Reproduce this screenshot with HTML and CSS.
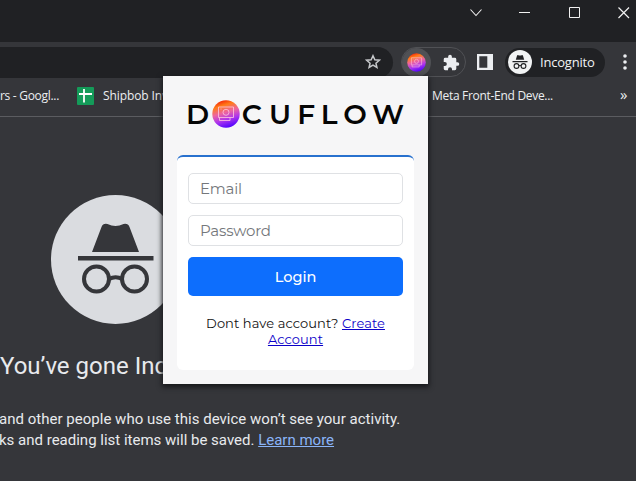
FILE: index.html
```html
<!DOCTYPE html>
<html lang="en">
<head>
<meta charset="utf-8">
<title>Docuflow</title>
<link rel="stylesheet" href="styles.css">
</head>
<body>
<div class="browser">
  <header class="titlebar">
    <svg class="window-controls" width="176" height="26" viewBox="0 0 176 26" fill="none" stroke="#f1f1f1">
      <path d="M10.500 9.500l5.500 6 5.500-6" stroke-width="1.100"/>
      <path d="M59 12.500h11"/>
      <path d="M109.500 7.500h10v10h-10z"/>
      <path d="M158.500 7.500l10.500 10.500M169 7.500l-10.500 10.500" stroke-width="1.200"/>
    </svg>
  </header>
  <div class="toolbar">
    <div class="omnibox">
      <svg width="16" height="16" viewBox="0 0 16 16" fill="none" stroke="#c6c8cb" stroke-width="1.500"><path d="M8 1.700l1.850 4.050 4.450.45-3.350 2.950.98 4.350L8 11.200l-3.930 2.300.98-4.350L1.700 6.200l4.450-.45z"/></svg>
    </div>
    <div class="extensions">
      <span class="extension-active">
        <svg width="19" height="19" viewBox="0 0 28 28"><use href="#brand"/></svg>
      </span>
      <svg class="puzzle" width="17" height="17" viewBox="1 0 23 23" fill="#eceef1"><path d="M20.500 11H19V7a2 2 0 0 0-2-2h-4V3.500a2.500 2.500 0 0 0-5 0V5H4a2 2 0 0 0-2 2v3.800h1.500a2.700 2.700 0 0 1 0 5.400H2V20a2 2 0 0 0 2 2h3.800v-1.500a2.700 2.700 0 0 1 5.400 0V22H17a2 2 0 0 0 2-2v-4h1.500a2.500 2.500 0 0 0 0-5z"/></svg>
    </div>
    <svg class="side-panel" width="16" height="16" viewBox="0 0 16 16"><path fill="#eceef1" fill-rule="evenodd" d="M0 0h16v16H0zM2.300 2.300v11.400h8V2.300z"/></svg>
    <div class="profile">
      <svg width="24" height="24" viewBox="0 0 24 24"><circle cx="12" cy="12" r="12" fill="#f1f3f4"/><path fill="#202124" d="M7.800 9.800L9 5.800q.4-1 1.300-.6 1.700.7 3.400 0 .9-.4 1.300.6l1.200 4zM4.500 11h15v1.200h-15z"/><g fill="none" stroke="#202124" stroke-width="1.100"><circle cx="8.500" cy="16" r="2.400"/><circle cx="15.500" cy="16" r="2.400"/><path d="M10.900 15.700q1.100-.5 2.200 0"/></g></svg>
      <span>Incognito</span>
    </div>
    <svg class="more" width="4" height="16" viewBox="0 0 4 16" fill="#eceef1"><circle cx="2" cy="2" r="1.800"/><circle cx="2" cy="8" r="1.800"/><circle cx="2" cy="14" r="1.800"/></svg>
  </div>
  <nav class="bookmarks">
    <span class="bookmark-first">rs - Googl...</span>
    <svg class="sheet" width="17" height="18" viewBox="0 0 17 18"><rect width="17" height="18" rx="1" fill="#149b59"/><path d="M2 7h13M7 2v13.500" stroke="#fff" stroke-width="1.800"/></svg>
    <span class="bookmark-ship">Shipbob Inventory</span>
    <span class="bookmark-meta">Meta Front-End Deve...</span>
    <span class="overflow">»</span>
  </nav>
  <main class="page">
    <svg class="incognito" width="129" height="129" viewBox="0 0 129 129">
      <circle cx="64.500" cy="64.500" r="64.500" fill="#dadce0"/>
      <path fill="#35363a" d="M41 57L50.500 32q1.500-4 6-3 8 4 16 0 4.500-1 6 3L88 57z"/>
      <path fill="#35363a" d="M27 61h75.500v4.500H27z"/>
      <g fill="none" stroke="#35363a" stroke-width="4"><circle cx="45.500" cy="84" r="12.500"/><circle cx="83.500" cy="84" r="12.500"/><path d="M58 84q6.600-3.500 13.200 0"/></g>
    </svg>
    <h1>You’ve gone Incognito</h1>
    <p><span class="line-one">and other people who use this device won’t see your activity.</span><br><span class="line-two">ks and reading list items will be saved. <a href="#">Learn more</a></span></p>
  </main>
</div>
<section class="popup">
  <svg class="wordmark" width="217" height="28" viewBox="0 0 217 28">
    <defs>
      <linearGradient id="brand-fill" x1=".3" y1="0" x2=".62" y2="1"><stop offset="0" stop-color="#f51f08"/><stop offset=".2" stop-color="#ff7c18"/><stop offset=".45" stop-color="#ed65a0"/><stop offset=".7" stop-color="#ae35ed"/><stop offset="1" stop-color="#4c00ff"/></linearGradient>
      <g id="brand"><circle cx="14" cy="14" r="13.700" fill="url(#brand-fill)"/><g fill="none" stroke="#ffc7df" stroke-width=".8"><path d="M6.500 7h15v10.500h-15z"/><circle cx="14" cy="12.300" r="3"/><path d="M7.500 17.500v3h10.500v-3M8.500 9h1"/></g></g>
    </defs>
    <use href="#brand" x="24"/>
    <text y="23.700" x="-2 53.700 81 109.300 132.800 155.300 184">DCUFLOW</text>
  </svg>
  <form class="card">
    <input type="email" placeholder="Email">
    <input type="password" placeholder="Password">
    <button type="button">Login</button>
    <div class="signup">Dont have account? <a href="#">Create<br>Account</a></div>
  </form>
</section>
</body>
</html>
```
FILE: styles.css
```css
* { box-sizing: border-box; }
body { margin: 0; overflow: hidden; }
svg { display: block; flex: none; }
.browser { width: 636px; height: 481px; background: #35363a; overflow: hidden; }
.titlebar { height: 42px; background: #202124; display: flex; justify-content: flex-end; }
.window-controls { width: 176px; }
.toolbar { height: 36px; display: flex; align-items: center; position: relative; padding-top: 4px; }
.omnibox { width: 393px; height: 31px; background: #202124; border-radius: 0 16px 16px 0; display: flex; align-items: center; justify-content: flex-end; padding-right: 12px; }
.extensions { width: 65px; height: 30px; margin-left: 8px; border: 1px solid #505155; border-radius: 15px; display: flex; align-items: center; }
.extension-active { width: 29px; height: 29px; border-radius: 50%; background: #505155; display: grid; place-items: center; }
.puzzle { margin-left: 12px; }
.side-panel { margin-left: 11px; }
.profile { width: 100px; height: 29px; margin-left: 12px; padding-left: 3px; border-radius: 15px; background: #202124; display: flex; align-items: center; gap: 8px; color: #f1f3f4; font: 13px "Open Sans", sans-serif; letter-spacing: -.2px; }
.profile span { margin-top: -1px; }
.more { margin-left: 18px; }
.bookmarks { height: 39px; border-bottom: 1px solid #5b5c60; display: flex; align-items: center; color: #eceef1; font: 12px "Open Sans", sans-serif; letter-spacing: -.3px; white-space: nowrap; padding-bottom: 2px; }
.bookmarks span { margin-top: -1px; }
.bookmark-first { width: 77px; }
.bookmarks .bookmark-ship { margin-left: 9px; width: 329px; letter-spacing: -.1px; }
.bookmark-meta { width: 188px; }
.bookmarks .overflow { font-size: 15px; margin-top: -4px; }
.page { color: #e8eaed; font-family: Roboto, sans-serif; white-space: nowrap; }
.incognito { margin: 78px 0 0 51px; }
h1 { margin: 28px 0 0; font-size: 24px; line-height: 28px; font-weight: 400; }
p { margin: 29px 0 0; font-size: 15px; line-height: 21px; }
.line-one { margin-left: -1px; letter-spacing: .02px; }
.line-two { margin-left: -1px; }
.page a { color: #8ab4f8; }
.popup { position: absolute; left: 163px; top: 76px; width: 265px; height: 308px; background: #f6f6f7; padding: 24px 14px 14px; box-shadow: 0 2px 5px 1px #17181b; font-family: Montserrat, sans-serif; }
.wordmark { margin-left: 11px; overflow: visible; }
.wordmark text { font: 600 28px Montserrat, sans-serif; fill: #050505; }
.card { margin: 27px 0 0; height: 215px; background: #fff; border-top: 2px solid #2871ce; border-radius: 6px; padding: 16px 11px 0; display: flex; flex-direction: column; }
input { height: 31px; width: 100%; margin-bottom: 11px; padding: 0 11px; border: 1px solid #dfe1e4; border-radius: 5px; background: #fff; font: 15px Montserrat, sans-serif; letter-spacing: -.18px; }
input::placeholder { color: #74777b; opacity: 1; }
button { height: 39px; border: 0; border-radius: 5px; background: #0d6efd; color: #fff; font: 500 14.500px Montserrat, sans-serif; }
.signup { margin-top: 19px; font-size: 13px; line-height: 16px; text-align: center; color: #111; letter-spacing: .08px; }
.signup a { color: #0b00c8; }
```
